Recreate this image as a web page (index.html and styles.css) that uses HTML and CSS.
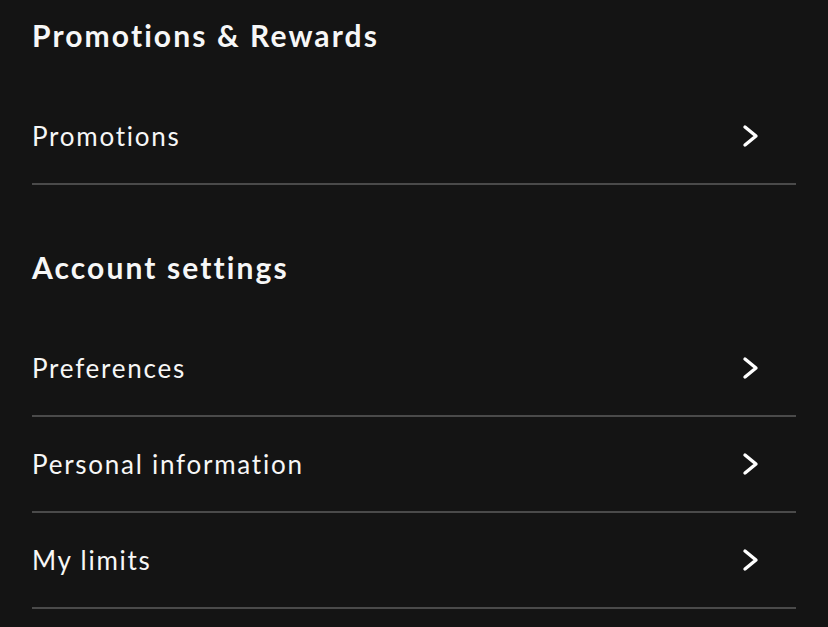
FILE: index.html
```html
<!DOCTYPE html>
<html lang="en">
<head>
<meta charset="utf-8">
<title>Settings</title>
<link rel="stylesheet" href="styles.css">
</head>
<body>
<main class="page">
  <section class="group">
    <h2 class="group-title">Promotions &amp; Rewards</h2>
    <ul class="list">
      <li class="row"><span class="row-label">Promotions</span><svg class="chev" viewBox="0 0 17 24" width="17" height="24"><path d="M3 3 L14 12 L3 21" /></svg></li>
    </ul>
  </section>
  <section class="group group-next">
    <h2 class="group-title">Account settings</h2>
    <ul class="list">
      <li class="row"><span class="row-label">Preferences</span><svg class="chev" viewBox="0 0 17 24" width="17" height="24"><path d="M3 3 L14 12 L3 21" /></svg></li>
      <li class="row"><span class="row-label">Personal information</span><svg class="chev" viewBox="0 0 17 24" width="17" height="24"><path d="M3 3 L14 12 L3 21" /></svg></li>
      <li class="row"><span class="row-label">My limits</span><svg class="chev" viewBox="0 0 17 24" width="17" height="24"><path d="M3 3 L14 12 L3 21" /></svg></li>
    </ul>
  </section>
</main>
</body>
</html>
```

FILE: styles.css
```css
html, body {
  margin: 0;
  padding: 0;
  background: #141414;
}
body {
  font-family: "Lato", "Open Sans", sans-serif;
  color: #f7f7f7;
  height: 627px;
  overflow: hidden;
  font-variant-ligatures: none;
}
.page {
  padding: 15px 32px 0 32px;
}
.group-title {
  margin: 0 0 34px 0;
  font-size: 30px;
  line-height: 40px;
  font-weight: 700;
  letter-spacing: 2.1px;
}
.group-next {
  margin-top: 62px;
}
.list {
  list-style: none;
  margin: 0;
  padding: 0;
}
.row {
  height: 94px;
  display: flex;
  align-items: center;
  justify-content: space-between;
  border-bottom: 2px solid #4a4a4a;
  padding-right: 37px;
}
.row-label {
  font-size: 26px;
  line-height: 34px;
  font-weight: 400;
  letter-spacing: 1.75px;
}
.chev {
  display: block;
  fill: none;
  stroke: #ffffff;
  stroke-width: 3.4;
  stroke-linecap: round;
  stroke-linejoin: round;
}
```
